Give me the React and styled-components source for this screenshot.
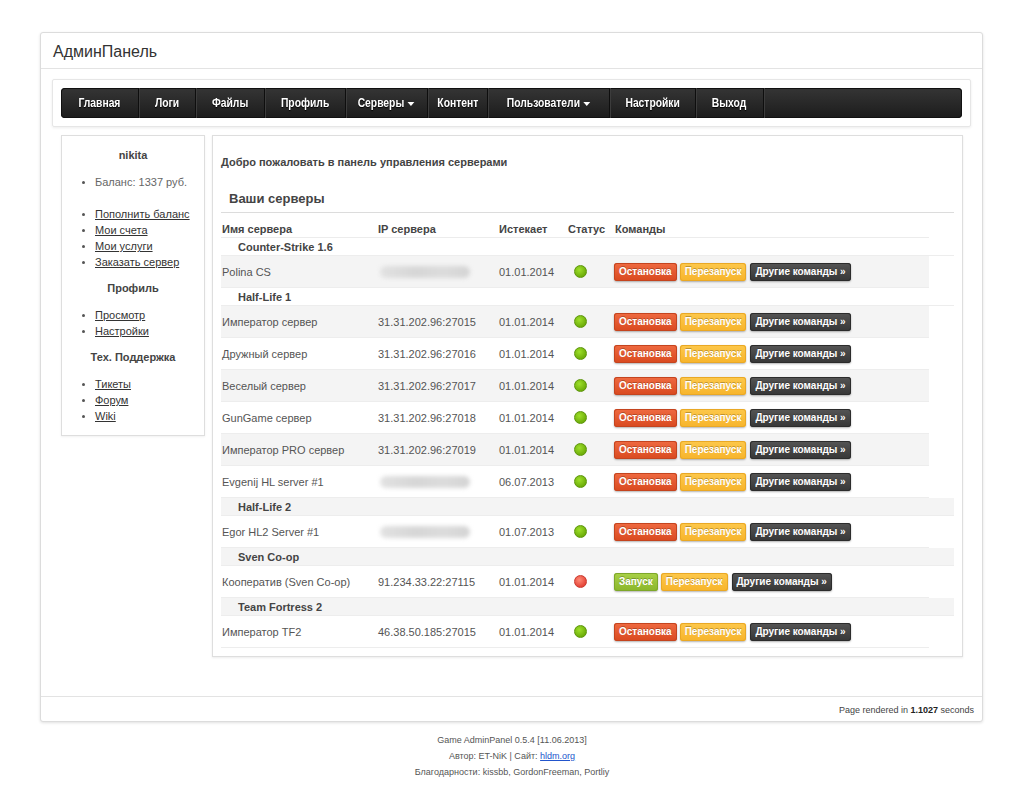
import React from 'react';
import styled, { createGlobalStyle } from 'styled-components';

const GlobalStyle = createGlobalStyle`
  html, body {
    margin: 0;
    padding: 0;
    background: #fff;
    font-family: "Liberation Sans", Arial, sans-serif;
    font-size: 11px;
    color: #555;
  }
`;

// widths taken from the original menu
const NAV = [
  { label: 'Главная', width: 78 },
  { label: 'Логи', width: 57 },
  { label: 'Файлы', width: 69 },
  { label: 'Профиль', width: 81 },
  { label: 'Серверы', width: 82, drop: true },
  { label: 'Контент', width: 60 },
  { label: 'Пользователи', width: 122, drop: true },
  { label: 'Настройки', width: 86 },
  { label: 'Выход', width: 68 },
];

const GROUPS = [
  {
    game: 'Counter-Strike 1.6',
    servers: [{ name: 'Polina CS', ip: null, exp: '01.01.2014', on: true }],
  },
  {
    game: 'Half-Life 1',
    servers: [
      { name: 'Император сервер', ip: '31.31.202.96:27015', exp: '01.01.2014', on: true },
      { name: 'Дружный сервер', ip: '31.31.202.96:27016', exp: '01.01.2014', on: true },
      { name: 'Веселый сервер', ip: '31.31.202.96:27017', exp: '01.01.2014', on: true },
      { name: 'GunGame сервер', ip: '31.31.202.96:27018', exp: '01.01.2014', on: true },
      { name: 'Император PRO сервер', ip: '31.31.202.96:27019', exp: '01.01.2014', on: true },
      { name: 'Evgenij HL server #1', ip: null, exp: '06.07.2013', on: true },
    ],
  },
  {
    game: 'Half-Life 2',
    servers: [{ name: 'Egor HL2 Server #1', ip: null, exp: '01.07.2013', on: true }],
  },
  {
    game: 'Sven Co-op',
    servers: [{ name: 'Кооператив (Sven Co-op)', ip: '91.234.33.22:27115', exp: '01.01.2014', on: false }],
  },
  {
    game: 'Team Fortress 2',
    servers: [{ name: 'Император TF2', ip: '46.38.50.185:27015', exp: '01.01.2014', on: true }],
  },
];

const BTN = {
  red: ['#ef6a41', '#d9491f', '#c4441f'],
  yellow: ['#fdc84b', '#f7b42b', '#e9a825'],
  dark: ['#555', '#363636', '#2c2c2c'],
  green: ['#a9d147', '#8ab62b', '#7ea72a'],
};

const App = () => {
  let rowIndex = 0;
  return (
    <>
      <GlobalStyle />
      <Wrapper>
        <Title>АдминПанель</Title>
        <NavBox>
          <NavBar>
            {NAV.map(item => (
              <NavItem key={item.label} $width={item.width}>
                <NavLabel>
                  {item.label}
                  {item.drop ? <Caret /> : null}
                </NavLabel>
              </NavItem>
            ))}
          </NavBar>
        </NavBox>

        <Content>
          <Sidebar>
            <SideHead>nikita</SideHead>
            <SideList>
              <li><Plain>Баланс: 1337 руб.</Plain></li>
            </SideList>
            <SideList $gap>
              <li><SideLink href="#">Пополнить баланс</SideLink></li>
              <li><SideLink href="#">Мои счета</SideLink></li>
              <li><SideLink href="#">Мои услуги</SideLink></li>
              <li><SideLink href="#">Заказать сервер</SideLink></li>
            </SideList>
            <SideHead $mid>Профиль</SideHead>
            <SideList>
              <li><SideLink href="#">Просмотр</SideLink></li>
              <li><SideLink href="#">Настройки</SideLink></li>
            </SideList>
            <SideHead $mid>Тех. Поддержка</SideHead>
            <SideList>
              <li><SideLink href="#">Тикеты</SideLink></li>
              <li><SideLink href="#">Форум</SideLink></li>
              <li><SideLink href="#">Wiki</SideLink></li>
            </SideList>
          </Sidebar>

          <Main>
            <Welcome>Добро пожаловать в панель управления серверами</Welcome>
            <SectionTitle>Ваши серверы</SectionTitle>
            <Table>
              <HeadRow>
                <span>Имя сервера</span>
                <span>IP сервера</span>
                <span>Истекает</span>
                <span>Статус</span>
                <span>Команды</span>
              </HeadRow>
              {GROUPS.map(group => {
                rowIndex += 1;
                const groupRow = (
                  <GroupRow key={group.game} $striped={rowIndex % 2 === 0}>
                    {group.game}
                  </GroupRow>
                );
                const rows = group.servers.map(srv => {
                  rowIndex += 1;
                  return (
                    <ServerRow key={srv.name} $striped={rowIndex % 2 === 0}>
                      <span>{srv.name}</span>
                      <span>{srv.ip ? srv.ip : <Hidden />}</span>
                      <span>{srv.exp}</span>
                      <span><Dot $on={srv.on} /></span>
                      <Commands>
                        {srv.on
                          ? <Button $kind="red">Остановка</Button>
                          : <Button $kind="green">Запуск</Button>}
                        <Button $kind="yellow">Перезапуск</Button>
                        <Button $kind="dark">Другие команды »</Button>
                      </Commands>
                    </ServerRow>
                  );
                });
                return [groupRow, ...rows];
              })}
            </Table>
          </Main>
        </Content>

        <Footer>
          Page rendered in <b>1.1027</b> seconds
        </Footer>
      </Wrapper>

      <Credits>
        <p>Game AdminPanel 0.5.4 [11.06.2013]</p>
        <p>Автор: ET-NiK | Сайт: <a href="#">hldm.org</a></p>
        <p>Благодарности: kissbb, GordonFreeman, Portliy</p>
      </Credits>
    </>
  );
};

const Wrapper = styled.div`
  width: 941px;
  margin: 32px 0 0 40px;
  border: 1px solid #dcdcdc;
  border-radius: 3px;
  box-shadow: 0 1px 3px rgba(0, 0, 0, 0.12);
  background: #fff;
`;

const Title = styled.div`
  height: 35px;
  line-height: 38px;
  padding-left: 12px;
  font-size: 16px;
  color: #333;
  border-bottom: 1px solid #e3e3e3;
`;

const NavBox = styled.div`
  margin: 10px 11px 0;
  padding: 8px;
  border: 1px solid #e6e6e6;
  border-radius: 2px;
  box-shadow: 0 1px 3px rgba(0, 0, 0, 0.08);
`;

const NavBar = styled.div`
  display: flex;
  height: 30px;
  border-radius: 4px;
  background: linear-gradient(#353535, #1c1c1c);
  box-shadow: inset 0 0 0 1px #111;
  overflow: hidden;
`;

const NavItem = styled.div`
  display: flex;
  align-items: center;
  justify-content: center;
  width: ${p => p.$width - 1}px;
  color: #fff;
  font-weight: bold;
  font-size: 12px;
  text-shadow: 0 1px 1px #000;
  border-right: 1px solid #0e0e0e;
  box-shadow: 1px 0 0 #3c3c3c;
`;

const NavLabel = styled.span`
  display: inline-flex;
  align-items: center;
  gap: 4px;
  white-space: nowrap;
  transform: scaleX(0.86);
`;

const Caret = styled.span`
  width: 0;
  height: 0;
  border-left: 4px solid transparent;
  border-right: 4px solid transparent;
  border-top: 4px solid #fff;
  margin-top: 1px;
`;

const Content = styled.div`
  display: flex;
  align-items: flex-start;
  gap: 7px;
  padding: 8px 19px 0 20px;
`;

const Sidebar = styled.div`
  width: 142px;
  padding: 11px 0 11px;
  border: 1px solid #dedede;
  box-shadow: 0 1px 2px rgba(0, 0, 0, 0.06);
`;

const SideHead = styled.div`
  text-align: center;
  font-weight: bold;
  color: #444;
  line-height: 16px;
  margin: ${p => (p.$mid ? '10px 0' : '0')};
`;

const SideList = styled.ul`
  margin: ${p => (p.$gap ? '16px 0 0' : '11px 0 0')};
  padding: 0 0 0 33px;
  line-height: 16px;
  list-style: disc;
  li::marker {
    color: #555;
    font-size: 10px;
  }
`;

const Plain = styled.span`
  color: #666;
`;

const SideLink = styled.a`
  color: #333;
  text-decoration: underline;
`;

const Main = styled.div`
  flex: 1;
  padding: 18px 8px 8px 8px;
  border: 1px solid #dedede;
  box-shadow: 0 1px 2px rgba(0, 0, 0, 0.08);
`;

const Welcome = styled.div`
  font-weight: bold;
  color: #444;
  line-height: 16px;
`;

const SectionTitle = styled.div`
  margin-top: 19px;
  padding: 0 0 3px 8px;
  line-height: 20px;
  font-size: 13px;
  font-weight: bold;
  color: #444;
  border-bottom: 1px solid #dcdcdc;
`;

const Table = styled.div`
  display: flex;
  flex-direction: column;
`;

const COLS = '156px 121px 69px 47px 315px';

const HeadRow = styled.div`
  display: grid;
  grid-template-columns: ${COLS};
  width: 708px;
  padding-top: 8px;
  line-height: 16px;
  font-weight: bold;
  color: #444;
  border-bottom: 1px solid #ececec;
  span {
    padding-left: 1px;
  }
`;

const GroupRow = styled.div`
  height: 17px;
  line-height: 18px;
  padding-left: 17px;
  font-weight: bold;
  color: #444;
  background: ${p => (p.$striped ? '#f4f4f4' : '#fff')};
  border-bottom: 1px solid #ededed;
`;

const ServerRow = styled.div`
  display: grid;
  grid-template-columns: ${COLS};
  align-items: center;
  width: 708px;
  height: 31px;
  color: #555;
  background: ${p => (p.$striped ? '#f4f4f4' : '#fff')};
  border-bottom: 1px solid #ededed;
  > span {
    padding-left: 1px;
    display: flex;
    align-items: center;
  }
`;

const Hidden = styled.span`
  display: block;
  width: 90px;
  height: 12px;
  margin-left: 2px;
  border-radius: 6px;
  background: linear-gradient(90deg, #e2e2e2, #d6d6d6 40%, #dcdcdc 70%, #d4d4d4);
  filter: blur(2px);
`;

const Dot = styled.span`
  display: block;
  width: 11px;
  height: 11px;
  margin-left: 6px;
  border-radius: 50%;
  background: ${p =>
    p.$on
      ? 'radial-gradient(circle at 40% 35%, #9ee02a, #6fae0b 70%)'
      : 'radial-gradient(circle at 40% 35%, #ff8a76, #e5473a 70%)'};
  border: 1px solid ${p => (p.$on ? '#5c950a' : '#c9392d')};
`;

const Commands = styled.div`
  display: flex;
  gap: 3px;
`;

const Button = styled.span`
  display: inline-block;
  height: 18px;
  line-height: 18px;
  padding: 0 5px;
  border-radius: 3px;
  font-size: 10px;
  font-weight: bold;
  color: #fff;
  text-shadow: 0 -1px 0 rgba(0, 0, 0, 0.25);
  background: linear-gradient(${p => BTN[p.$kind][0]}, ${p => BTN[p.$kind][1]});
  box-shadow: 0 0 0 1px ${p => BTN[p.$kind][2]} inset, 0 1px 2px rgba(0, 0, 0, 0.3);
  margin-right: ${p => (p.$kind === 'yellow' ? '1px' : '0')};
`;

const Footer = styled.div`
  margin-top: 39px;
  border-top: 1px solid #e3e3e3;
  padding: 0 8px;
  height: 24px;
  line-height: 26px;
  text-align: right;
  font-size: 9px;
  color: #444;
  b {
    color: #222;
  }
`;

const Credits = styled.div`
  margin-top: 10px;
  text-align: center;
  font-size: 9px;
  color: #555;
  p {
    margin: 0;
    line-height: 16px;
  }
  a {
    color: #2255cc;
    text-decoration: underline;
  }
`;

export default App;
